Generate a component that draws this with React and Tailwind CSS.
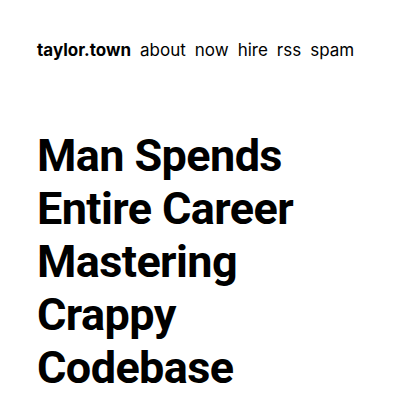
export default function App() {
  return (
    <div className="min-h-[400px] bg-white text-black px-[37px] pt-[38px]" style={{ fontFamily: "Inter, 'Noto Sans', sans-serif" }}>
      <nav className="flex gap-[9px] text-[17px] leading-[24px]">
        <span className="font-bold">taylor.town</span>
        <span>about</span>
        <span>now</span>
        <span>hire</span>
        <span>rss</span>
        <span>spam</span>
      </nav>
      <h1 className="mt-[67px] text-[45px] leading-[53px] font-bold tracking-[-0.6px]" style={{ fontFamily: "Roboto, sans-serif" }}>
        Man Spends<br />Entire Career<br />Mastering<br />Crappy<br />Codebase
      </h1>
    </div>
  );
}
